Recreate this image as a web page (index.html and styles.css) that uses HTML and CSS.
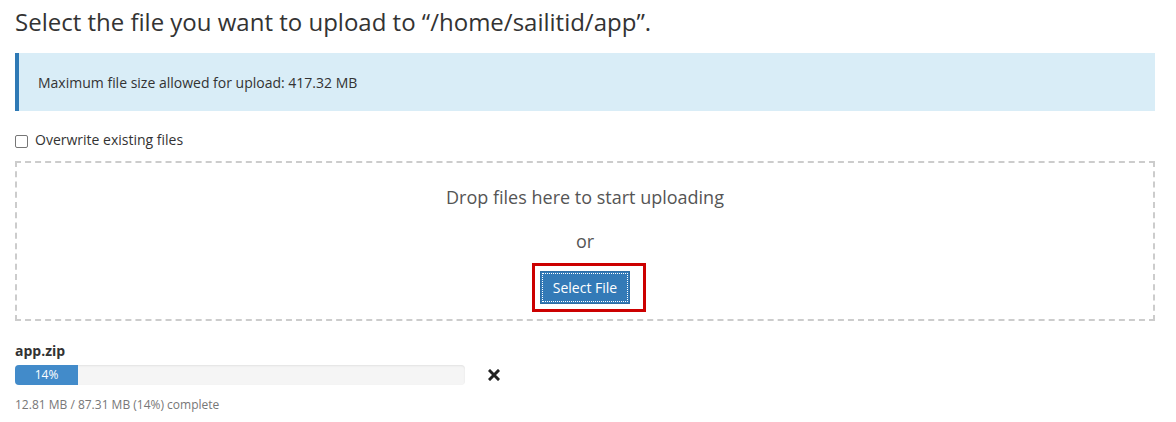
FILE: index.html
```html
<!DOCTYPE html>
<html>
<head>
<meta charset="utf-8">
<link rel="stylesheet" href="styles.css">
</head>
<body>
<div class="page">
  <h1 class="title">Select the file you want to upload to “/home/sailitid/app”.</h1>
  <div class="alert">Maximum file size allowed for upload: 417.32 MB</div>
  <label class="check"><span class="box"></span>Overwrite existing files</label>
  <div class="drop">
    <div class="drop-msg">Drop files here to start uploading</div>
    <div class="drop-or">or</div>
    <div class="btn-wrap">
      <button class="btn">Select File</button>
      <span class="highlight"></span>
    </div>
  </div>
  <div class="file">
    <div class="file-name">app.zip</div>
    <div class="file-row">
      <div class="bar"><div class="fill" style="width:14%">14%</div></div>
      <svg class="cancel" width="12" height="12" viewBox="0 0 12 12"><path d="M2 2 L10 10 M10 2 L2 10" stroke="#222" stroke-width="3" stroke-linecap="square"/></svg>
    </div>
    <div class="file-status">12.81 MB / 87.31 MB (14%) complete</div>
  </div>
</div>
</body>
</html>
```
FILE: styles.css
```css
html, body { margin: 0; padding: 0; background: #fff; }
body { font-family: "Open Sans", "Liberation Sans", sans-serif; color: #333; }
.page { width: 1140px; padding: 0 0 0 15px; }
.title { font-size: 24px; font-weight: 400; line-height: 26px; margin: 9px 0 0 0; color: #333; }
.alert { margin-top: 18px; height: 58px; box-sizing: border-box; background: #d9edf7; border-left: 4px solid #2e79b5; padding: 0 19px; display: flex; align-items: center; font-size: 14px; color: #333; }
.check { display: flex; align-items: center; margin-top: 19px; font-size: 14px; line-height: 20px; color: #333; }
.box { width: 11px; height: 11px; border: 1px solid #767676; border-radius: 2px; margin-right: 7px; margin-top: 2px; }
.drop { margin-top: 11px; height: 160px; box-sizing: border-box; border: 2px dashed #ccc; display: flex; flex-direction: column; align-items: center; }
.drop-msg { margin-top: 22px; font-size: 18px; line-height: 24px; color: #555; }
.drop-or { margin-top: 20px; font-size: 18px; line-height: 24px; color: #555; }
.btn-wrap { position: relative; margin-top: 18px; }
.btn { display: block; width: 90px; height: 33px; background: #337ab7; color: #fff; border: 1px solid #2e6da4; font-family: "Open Sans", "Liberation Sans", sans-serif; font-size: 14px; padding: 0; outline: 1px dotted #fff; outline-offset: -3px; }
.highlight { position: absolute; left: -8px; top: -8px; width: 108px; height: 43px; border: 3px solid #c00; }
.file { margin-top: 21px; }
.file-name { font-weight: 700; font-size: 14px; line-height: 18px; color: #333; }
.file-row { display: flex; align-items: center; margin-top: 5px; }
.bar { width: 450px; height: 20px; background: #f5f5f5; border-radius: 4px; overflow: hidden; box-shadow: inset 0 1px 2px rgba(0,0,0,0.08); }
.fill { height: 20px; background: #428bca; color: #fff; font-size: 12px; line-height: 20px; text-align: center; }
.cancel { margin-left: 23px; }
.file-status { margin-top: 12px; font-size: 12px; line-height: 16px; color: #777; }
```
